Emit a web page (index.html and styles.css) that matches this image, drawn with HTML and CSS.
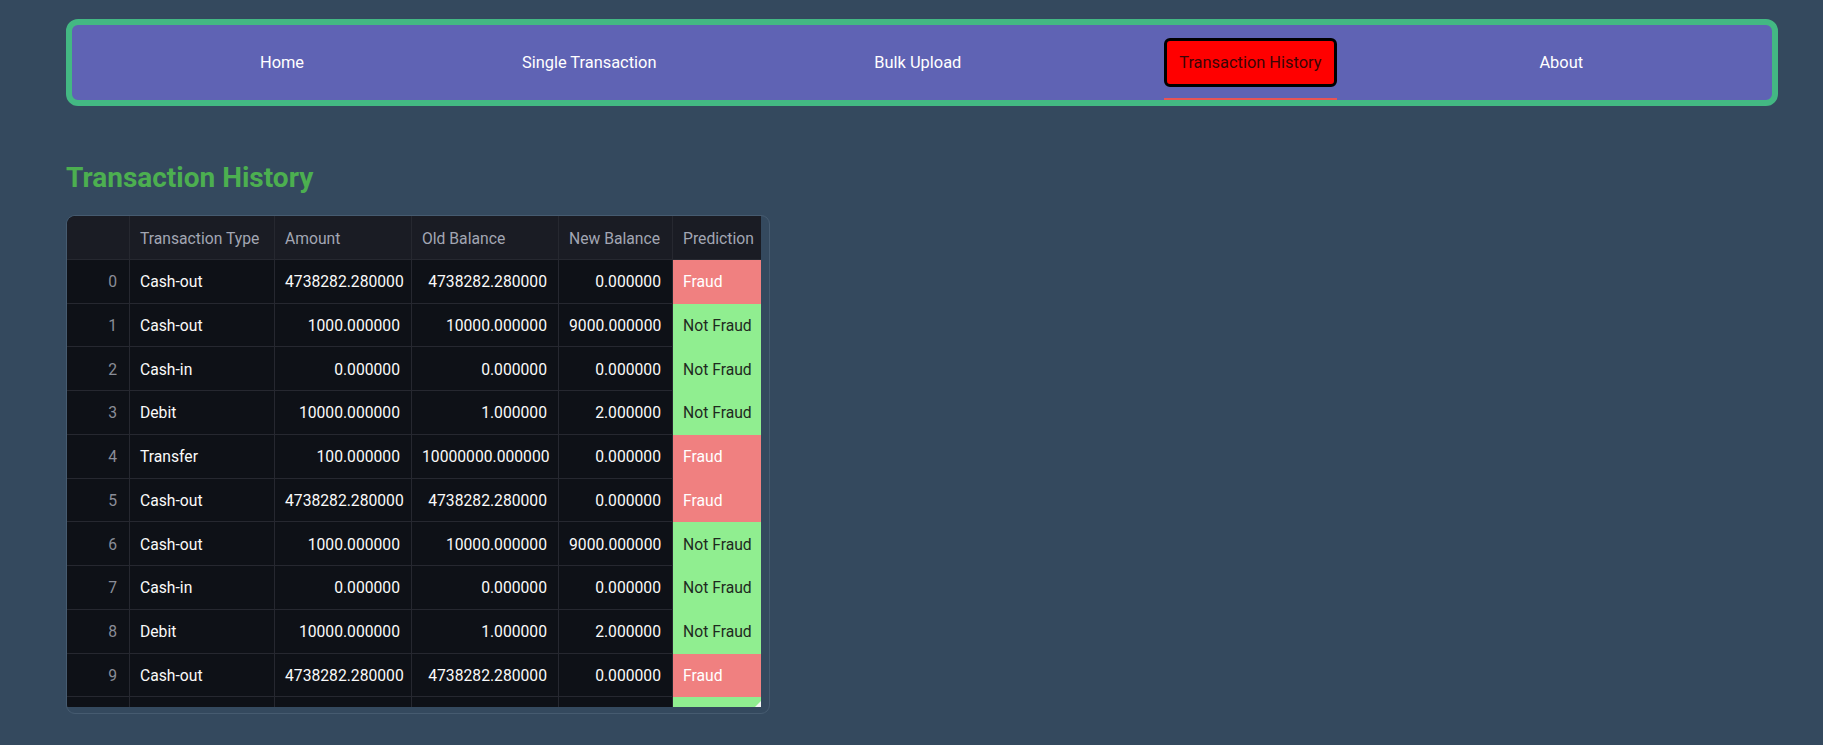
FILE: index.html
```html
<!DOCTYPE html>
<html lang="en">
<head>
<meta charset="utf-8">
<title>Transaction History</title>
<link rel="stylesheet" href="styles.css">
</head>
<body>
<div class="page">
  <nav class="nav">
    <ul class="nav-list">
      <li class="nav-item"><div class="tab"><a class="nav-link">Home</a></div></li>
      <li class="nav-item"><div class="tab"><a class="nav-link">Single Transaction</a></div></li>
      <li class="nav-item"><div class="tab"><a class="nav-link">Bulk Upload</a></div></li>
      <li class="nav-item"><div class="tab active"><a class="nav-link">Transaction History</a></div></li>
      <li class="nav-item"><div class="tab"><a class="nav-link">About</a></div></li>
    </ul>
  </nav>

  <h3 class="title">Transaction History</h3>

  <div class="frame">
    <div class="grid-wrap">
      <table class="grid">
        <colgroup>
          <col class="c-idx"><col class="c-type"><col class="c-amt"><col class="c-old"><col class="c-new"><col class="c-pred">
        </colgroup>
        <thead>
          <tr><th class="idx"></th><th>Transaction Type</th><th>Amount</th><th>Old Balance</th><th>New Balance</th><th>Prediction</th></tr>
        </thead>
        <tbody>
          <tr><td class="idx">0</td><td>Cash-out</td><td class="num">4738282.280000</td><td class="num">4738282.280000</td><td class="num">0.000000</td><td class="fraud">Fraud</td></tr>
          <tr><td class="idx">1</td><td>Cash-out</td><td class="num">1000.000000</td><td class="num">10000.000000</td><td class="num">9000.000000</td><td class="ok">Not Fraud</td></tr>
          <tr><td class="idx">2</td><td>Cash-in</td><td class="num">0.000000</td><td class="num">0.000000</td><td class="num">0.000000</td><td class="ok">Not Fraud</td></tr>
          <tr><td class="idx">3</td><td>Debit</td><td class="num">10000.000000</td><td class="num">1.000000</td><td class="num">2.000000</td><td class="ok">Not Fraud</td></tr>
          <tr><td class="idx">4</td><td>Transfer</td><td class="num">100.000000</td><td class="num">10000000.000000</td><td class="num">0.000000</td><td class="fraud">Fraud</td></tr>
          <tr><td class="idx">5</td><td>Cash-out</td><td class="num">4738282.280000</td><td class="num">4738282.280000</td><td class="num">0.000000</td><td class="fraud">Fraud</td></tr>
          <tr><td class="idx">6</td><td>Cash-out</td><td class="num">1000.000000</td><td class="num">10000.000000</td><td class="num">9000.000000</td><td class="ok">Not Fraud</td></tr>
          <tr><td class="idx">7</td><td>Cash-in</td><td class="num">0.000000</td><td class="num">0.000000</td><td class="num">0.000000</td><td class="ok">Not Fraud</td></tr>
          <tr><td class="idx">8</td><td>Debit</td><td class="num">10000.000000</td><td class="num">1.000000</td><td class="num">2.000000</td><td class="ok">Not Fraud</td></tr>
          <tr><td class="idx">9</td><td>Cash-out</td><td class="num">4738282.280000</td><td class="num">4738282.280000</td><td class="num">0.000000</td><td class="fraud">Fraud</td></tr>
          <tr><td class="idx"></td><td></td><td class="num"></td><td class="num"></td><td class="num"></td><td class="ok"></td></tr>
        </tbody>
      </table>
      <span class="resize"></span>
    </div>
  </div>
</div>
</body>
</html>
```

FILE: styles.css
```css
html, body {
  margin: 0;
  padding: 0;
  background: #34495e;
  font-family: Roboto, "Noto Sans", Arial, sans-serif;
}

.page {
  padding: 19px 45px 0 66px;
}

/* ---------- navigation ---------- */
.nav {
  border: 6px solid #43b883;
  border-radius: 12px;
  background: #5f63b4;
}

.nav-list {
  display: flex;
  list-style: none;
  margin: 0;
  padding: 13px 80px 0 79px;
}

.nav-item {
  flex: 1 1 auto;
  display: flex;
  justify-content: center;
}

.tab {
  padding-bottom: 11px;
  border-bottom: 2px solid transparent;
}

.tab.active {
  border-bottom-color: #e85454;
}

.nav-link {
  display: block;
  padding: 8px 12px;
  border: 3px solid transparent;
  border-radius: 6px;
  color: #ffffff;
  font-size: 16.4px;
  line-height: 27px;
  white-space: nowrap;
}

.tab.active .nav-link {
  background: #ff0000;
  border-color: #000000;
  color: #3a0606;
}

/* ---------- title ---------- */
.title {
  margin: 55px 0 21px 0;
  font-size: 28px;
  line-height: 33px;
  font-weight: 700;
  color: #4caf50;
}

/* ---------- data grid ---------- */
.frame {
  width: 704px;
  border: 1px solid #465b70;
  border-radius: 9px;
  overflow: hidden;
  padding: 0 8px 6px 0;
  box-sizing: border-box;
}

.grid-wrap {
  position: relative;
  height: 491px;
  overflow: hidden;
  background: #0e1117;
  border-top-left-radius: 8px;
}

.grid {
  table-layout: fixed;
  border-collapse: separate;
  border-spacing: 0;
  width: 694px;
  font-size: 15.7px;
  color: #fafafa;
}

.c-idx { width: 63px; }
.c-type { width: 145px; }
.c-amt { width: 137px; }
.c-old { width: 147px; }
.c-new { width: 114px; }
.c-pred { width: 88px; }

.grid th,
.grid td {
  box-sizing: border-box;
  height: 43.75px;
  padding: 1px 10px 0 10px;
  border-right: 1px solid #262830;
  border-bottom: 1px solid #262830;
  white-space: nowrap;
  overflow: hidden;
  text-align: left;
  vertical-align: middle;
}

.grid th {
  background: #1a1c24;
  color: #a2a6b3;
  font-weight: 400;
  padding-top: 3px;
}

.grid th:last-child,
.grid td:last-child {
  border-right: none;
}

.grid td.idx {
  text-align: right;
  color: #8a8d98;
  padding-right: 12px;
}

.grid td.num {
  text-align: right;
  padding-right: 11px;
}

.grid td.fraud {
  background: #f08080;
  border-bottom-color: #f08080;
  color: #ffffff;
}

.grid td.ok {
  background: #90ee90;
  border-bottom-color: #90ee90;
  color: #1f2a1f;
}

.resize {
  position: absolute;
  right: 0;
  bottom: 0;
  width: 0;
  height: 0;
  border-left: 6px solid transparent;
  border-bottom: 6px solid #f4f4f4;
}
```
